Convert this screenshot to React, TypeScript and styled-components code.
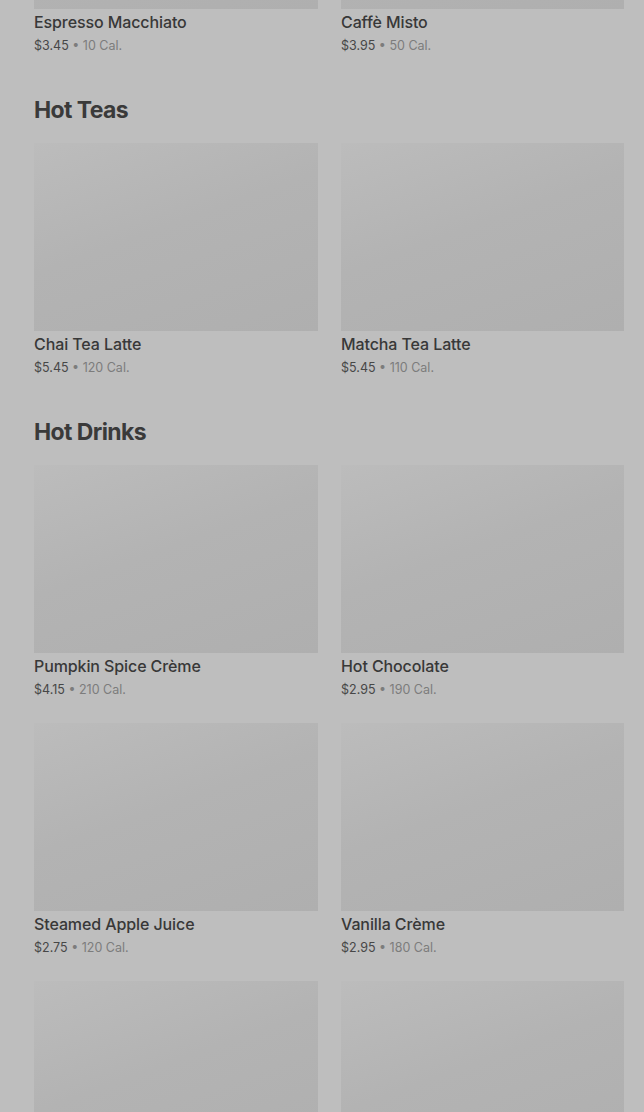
import styled, { createGlobalStyle } from "styled-components"

interface Item {
  name: string
  price: string
  cal: number
}

interface Section {
  title: string
  items: Item[]
}

const sections: Section[] = [
  {
    title: "Hot Coffees",
    items: [
      { name: "Espresso Macchiato", price: "$3.45", cal: 10 },
      { name: "Caffè Misto", price: "$3.95", cal: 50 },
    ],
  },
  {
    title: "Hot Teas",
    items: [
      { name: "Chai Tea Latte", price: "$5.45", cal: 120 },
      { name: "Matcha Tea Latte", price: "$5.45", cal: 110 },
    ],
  },
  {
    title: "Hot Drinks",
    items: [
      { name: "Pumpkin Spice Crème", price: "$4.15", cal: 210 },
      { name: "Hot Chocolate", price: "$2.95", cal: 190 },
      { name: "Steamed Apple Juice", price: "$2.75", cal: 120 },
      { name: "Vanilla Crème", price: "$2.95", cal: 180 },
      { name: "Caramel Apple Spice", price: "$4.45", cal: 330 },
      { name: "Steamed Milk", price: "$2.45", cal: 130 },
    ],
  },
]

const GlobalStyle = createGlobalStyle`
  html, body {
    margin: 0;
    padding: 0;
    background: #bebebe;
    overflow: hidden;
  }
  body {
    font-family: Inter, "Noto Sans", sans-serif;
    -webkit-font-smoothing: antialiased;
  }
`

const Page = styled.div`
  height: 1112px;
  overflow: hidden;
  background: #bebebe;
`

// scroll offset of the menu list
const Menu = styled.div`
  margin-top: -228px;
  padding: 0 20px 0 34px;
`

const Block = styled.section`
  padding-bottom: 39px;
`

const Heading = styled.h2`
  margin: 0 0 17px;
  font-size: 23px;
  line-height: 32px;
  font-weight: 700;
  letter-spacing: -0.6px;
  color: #3a3a3a;
`

const Grid = styled.div`
  display: grid;
  grid-template-columns: 284px 283px;
  column-gap: 23px;
  row-gap: 24px;
`

const Card = styled.div`
  display: flex;
  flex-direction: column;
`

const Thumb = styled.div`
  height: 188px;
  background: linear-gradient(160deg, #bcbcbc 0%, #b3b3b3 45%, #afafaf 100%);
`

const Name = styled.div`
  margin-top: 3px;
  font-size: 16px;
  line-height: 20px;
  font-weight: 500;
  color: #383838;
  letter-spacing: -0.1px;
`

const Meta = styled.div`
  margin-top: 5px;
  font-size: 12.5px;
  line-height: 18px;
  color: #7c7c7c;
`

const Price = styled.span`
  color: #474747;
`

export default function App() {
  return (
    <Page>
      <GlobalStyle />
      <Menu>
        {sections.map((s) => (
          <Block key={s.title}>
            <Heading>{s.title}</Heading>
            <Grid>
              {s.items.map((it) => (
                <Card key={it.name}>
                  <Thumb />
                  <Name>{it.name}</Name>
                  <Meta>
                    <Price>{it.price}</Price> • {it.cal} Cal.
                  </Meta>
                </Card>
              ))}
            </Grid>
          </Block>
        ))}
      </Menu>
    </Page>
  )
}
